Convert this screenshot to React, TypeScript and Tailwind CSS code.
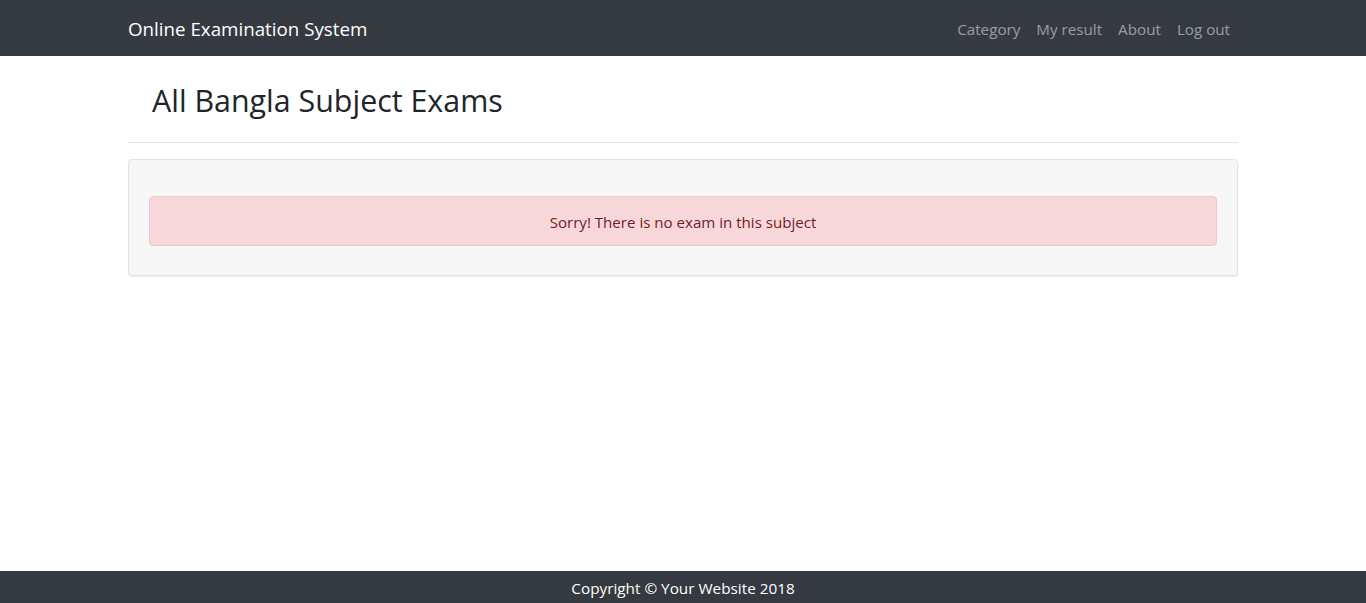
const navLinks = ["Category", "My result", "About", "Log out"];

const App = () => {
    return (
        <div className="min-h-screen flex flex-col bg-white text-[#212529]"
             style={{ fontFamily: '"Open Sans", "Liberation Sans", sans-serif' }}>
            {/* Navbar */}
            <nav className="bg-[#343a40] h-14">
                <div className="w-[1140px] mx-auto px-[15px] h-full flex items-center justify-between pt-[2px]">
                    <a href="#" className="text-white text-[18.75px] leading-[30px]">
                        Online Examination System
                    </a>
                    <ul className="flex items-center">
                        {navLinks.map((l) => (
                            <li key={l}>
                                <a href="#" className="block px-2 py-2 text-[15.2px] text-white/50">
                                    {l}
                                </a>
                            </li>
                        ))}
                    </ul>
                </div>
            </nav>

            {/* Content */}
            <main className="w-[1140px] mx-auto px-[15px]">
                <h2 className="text-[30.4px] leading-[38px] font-normal pl-6 pt-[26px] pb-[22px]">
                    All Bangla Subject Exams
                </h2>
                <hr className="border-0 border-t border-black/10" />

                <div className="mt-4 bg-[#f7f7f7] border border-[#e3e3e3] rounded
                                shadow-[0_1px_1px_rgba(0,0,0,0.08)] px-5 pt-9 pb-[29px]">
                    <div className="bg-[#f8d7da] border border-[#f5c6cb] rounded text-[#721c24]
                                    text-center text-[15.1px] leading-6 px-5 pt-[13px] pb-[11px]">
                        Sorry! There is no exam in this subject
                    </div>
                </div>
            </main>

            {/* Footer */}
            <footer className="mt-auto bg-[#343a40] h-8 flex items-center justify-center
                               text-white text-[15.3px] pt-[2px]">
                Copyright © Your Website 2018
            </footer>
        </div>
    );
};

export default App;
